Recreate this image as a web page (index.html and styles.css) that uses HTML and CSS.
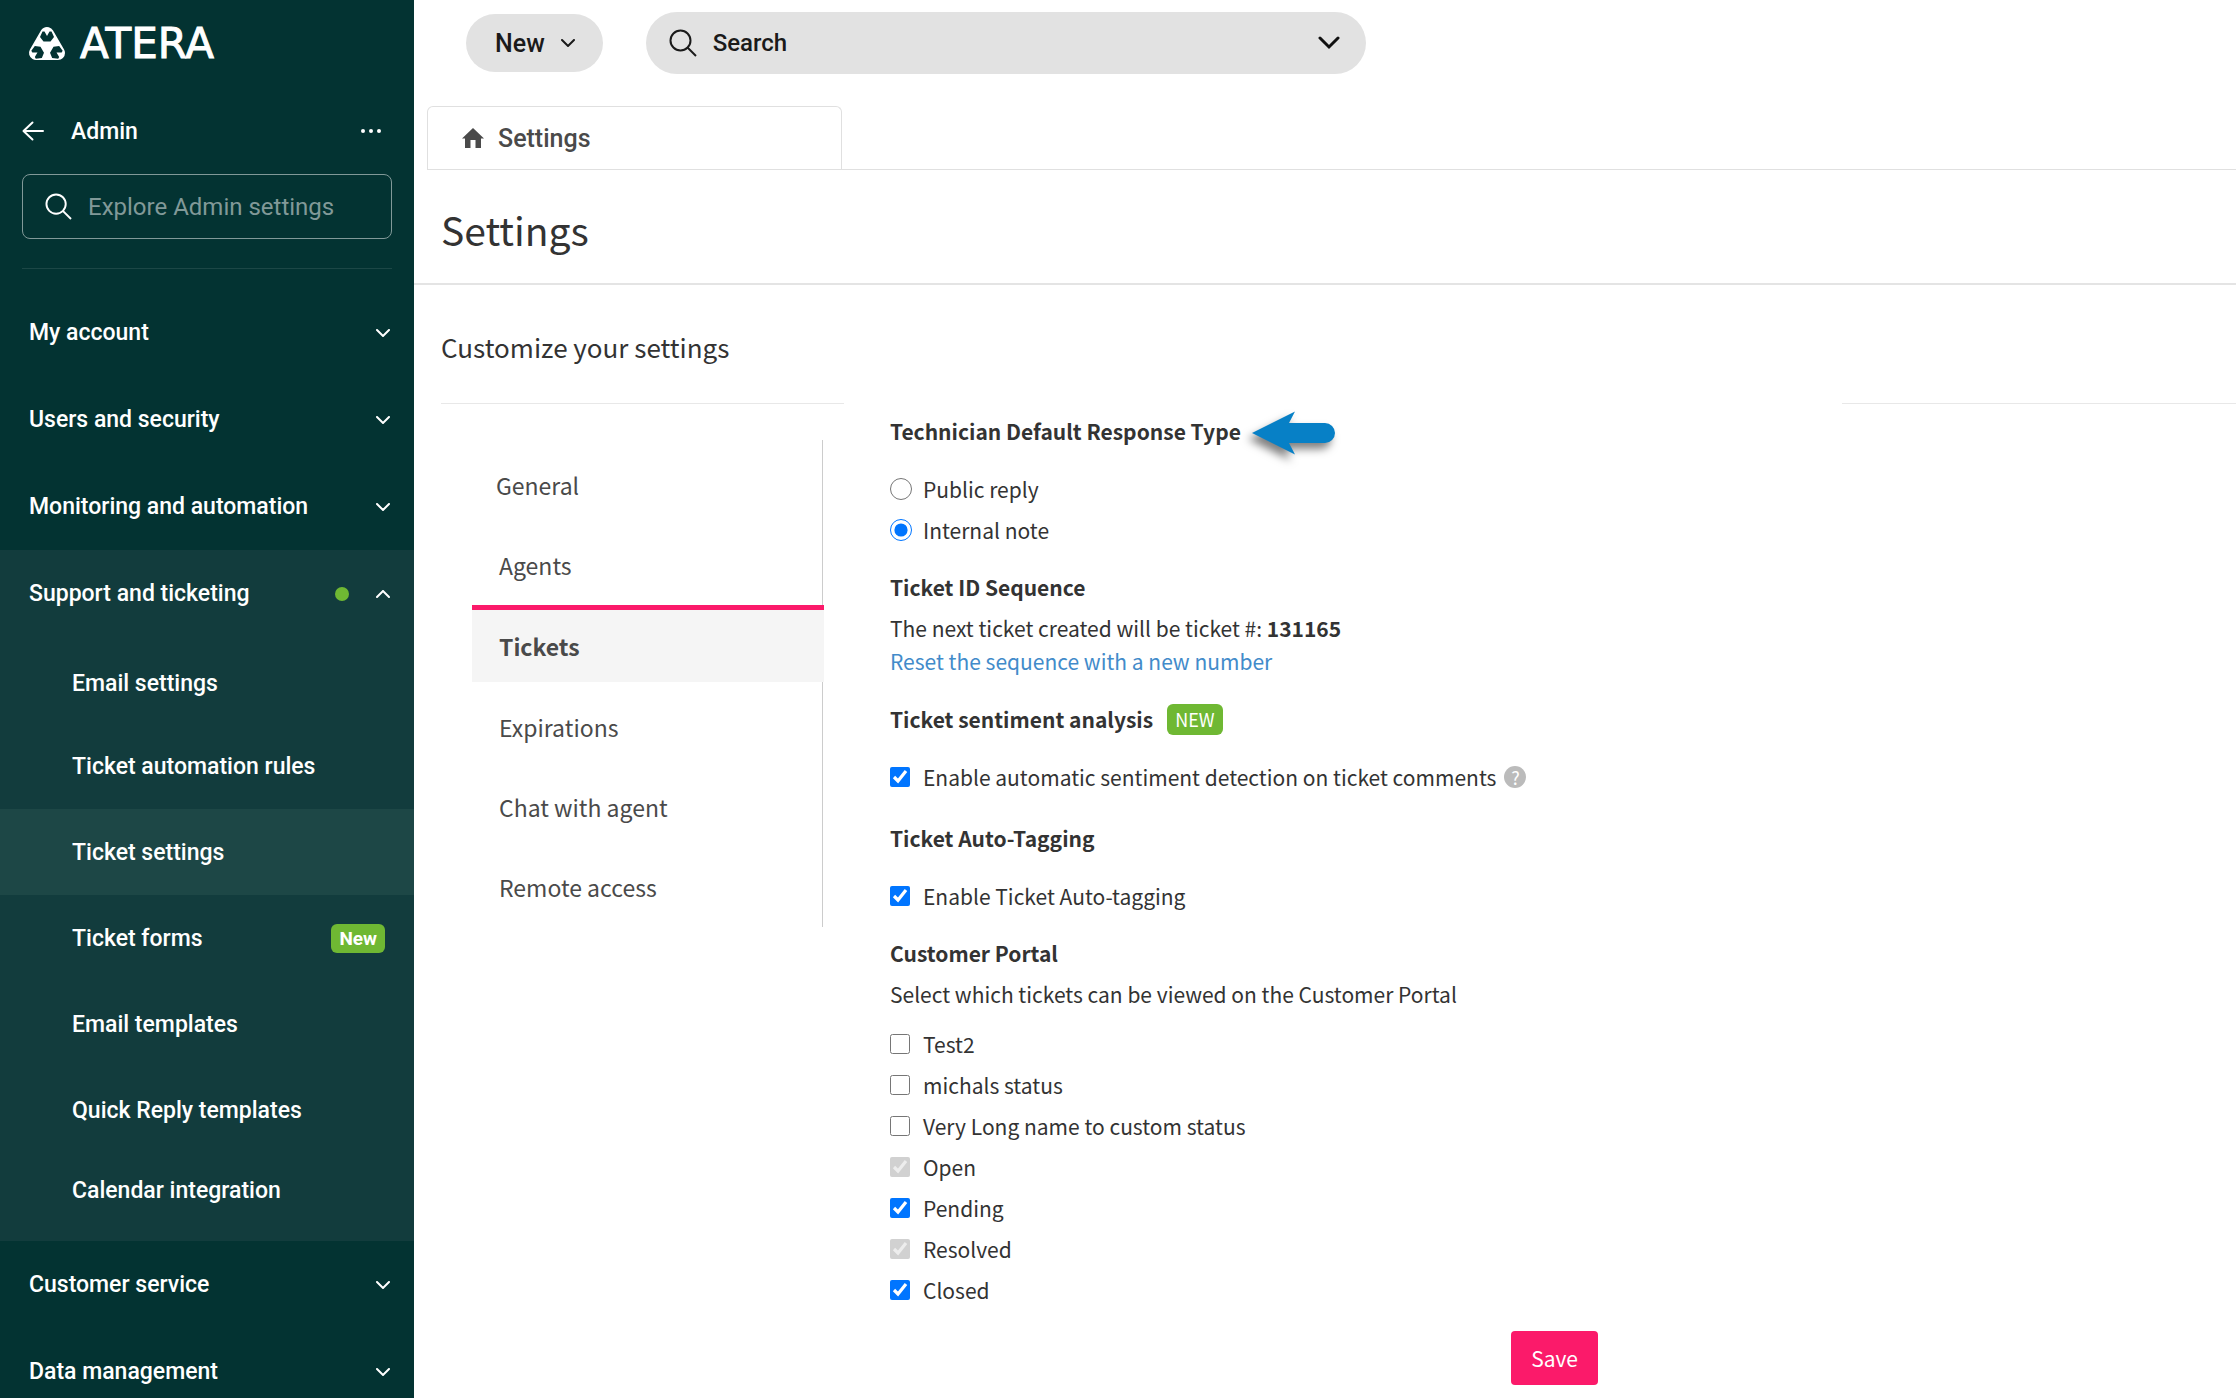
FILE: index.html
```html
<!DOCTYPE html>
<html lang="en">

<head>
    <meta charset="UTF-8">
    <meta name="viewport" content="width=device-width, initial-scale=1.0">
    <title>Settings</title>
    <link rel="stylesheet" href="styles.css">
</head>

<body>
    <!-- shared icons -->
    <svg class="sprite" aria-hidden="true">
        <symbol id="chevron" viewBox="0 0 14 8">
            <path d="M1 1l6 6 6-6" fill="none" stroke="currentColor" stroke-width="2" stroke-linecap="round" />
        </symbol>
        <symbol id="magnifier" viewBox="0 0 28 28">
            <circle cx="11.5" cy="11.5" r="10" fill="none" stroke="currentColor" stroke-width="2" />
            <path d="M18.5 18.5l8.500 8.500" stroke="currentColor" stroke-width="2" />
        </symbol>
    </svg>

    <div class="layout">
        <aside class="sidebar">
            <a href="#" class="logo" aria-label="Atera">
                <svg width="228" height="36" viewBox="0 0 228 36">
                    <path d="M19 9L8 28H30Z" fill="#fff" stroke="#fff" stroke-width="14" stroke-linejoin="round" />
                    <g fill="#033332">
                        <path id="blade" d="M14.500 6.500H16.500L19 11L21.500 6.500H23.500L26 12L22.500 16.500H15.500L12 12Z" />
                        <use href="#blade" transform="rotate(120 19 22)" />
                        <use href="#blade" transform="rotate(240 19 22)" />
                    </g>
                    <text x="52" y="33" class="logo-text">ATERA</text>
                </svg>
            </a>

            <div class="admin-bar">
                <button type="button" class="icon-btn" aria-label="Back">
                    <svg width="22" height="20" viewBox="0 0 22 20"><path d="M21 10H2M10.500 1.500L1.500 10l9 8.500" fill="none" stroke="#fff" stroke-width="2" stroke-linecap="round" stroke-linejoin="round" /></svg>
                </button>
                <span class="admin-title">Admin</span>
                <button type="button" class="icon-btn" aria-label="More">
                    <svg width="22" height="6" viewBox="0 0 22 6" fill="#fff"><circle cx="3" cy="3" r="2" /><circle cx="11" cy="3" r="2" /><circle cx="19" cy="3" r="2" /></svg>
                </button>
            </div>

            <label class="side-search">
                <svg width="27" height="27"><use href="#magnifier" /></svg>
                <input type="text" placeholder="Explore Admin settings" aria-label="Explore Admin settings">
            </label>

            <nav class="menu">
                <button type="button" class="menu-item">My account <svg class="chev"><use href="#chevron" /></svg></button>
                <button type="button" class="menu-item">Users and security <svg class="chev"><use href="#chevron" /></svg></button>
                <button type="button" class="menu-item">Monitoring and automation <svg class="chev"><use href="#chevron" /></svg></button>
                <div class="menu-group">
                    <button type="button" class="menu-item">Support and ticketing <span class="dot"></span><svg class="chev up"><use href="#chevron" /></svg></button>
                    <div class="submenu">
                        <a href="#">Email settings</a>
                        <a href="#">Ticket automation rules</a>
                        <a href="#" class="current">Ticket settings</a>
                        <a href="#">Ticket forms <span class="tag">New</span></a>
                        <a href="#">Email templates</a>
                        <a href="#">Quick Reply templates</a>
                        <a href="#">Calendar integration</a>
                    </div>
                </div>
                <button type="button" class="menu-item">Customer service <svg class="chev"><use href="#chevron" /></svg></button>
                <button type="button" class="menu-item">Data management <svg class="chev"><use href="#chevron" /></svg></button>
            </nav>
        </aside>

        <main class="main">
            <header class="topbar">
                <button type="button" class="new-btn">New <svg class="chev"><use href="#chevron" /></svg></button>
                <div class="search">
                    <svg width="28" height="28"><use href="#magnifier" /></svg>
                    <input type="text" placeholder="Search" aria-label="Search">
                    <button type="button" class="icon-btn" aria-label="Search options">
                        <svg width="22" height="14" viewBox="0 0 22 14"><path d="M2 2l9 9 9-9" fill="none" stroke="#111" stroke-width="3" stroke-linecap="round" /></svg>
                    </button>
                </div>
            </header>

            <div class="page-tabs">
                <a href="#" class="page-tab">
                    <svg width="22" height="20" viewBox="0 0 22 20"><path d="M11 0L0 10.500h3V20h5.500v-8h5v8H19v-9.500h3Z" fill="#4a4a4a" /></svg>
                    Settings
                </a>
            </div>

            <h1>Settings</h1>

            <h2>Customize your settings</h2>

            <div class="content">
                <div class="side-col">
                    <nav class="tabs">
                        <a href="#" class="first">General</a>
                        <a href="#">Agents</a>
                        <a href="#" class="active">Tickets</a>
                        <a href="#">Expirations</a>
                        <a href="#">Chat with agent</a>
                        <a href="#">Remote access</a>
                    </nav>
                </div>

                <form class="form">
                    <section>
                        <h3>Technician Default Response Type
                            <svg class="arrow" width="84" height="44" viewBox="0 0 84 44"><path d="M1 22L44 0.500 38 12h36a9.500 9.500 0 0 1 0 20H38L44 43.500Z" fill="#0780c6" /></svg>
                        </h3>
                        <label class="option"><input type="radio" name="reply">Public reply</label>
                        <label class="option"><input type="radio" name="reply" checked>Internal note</label>
                    </section>

                    <section>
                        <h3 class="tight">Ticket ID Sequence</h3>
                        <p>The next ticket created will be ticket #: <b>131165</b></p>
                        <p><a href="#">Reset the sequence with a new number</a></p>
                    </section>

                    <section class="wide">
                        <h3>Ticket sentiment analysis <span class="badge">NEW</span></h3>
                        <label class="option"><input type="checkbox" checked>Enable automatic sentiment detection on ticket comments <span class="help">?</span></label>
                    </section>

                    <section class="wide">
                        <h3>Ticket Auto-Tagging</h3>
                        <label class="option"><input type="checkbox" checked>Enable Ticket Auto-tagging</label>
                    </section>

                    <section>
                        <h3 class="tight">Customer Portal</h3>
                        <p>Select which tickets can be viewed on the Customer Portal</p>
                        <div class="statuses">
                            <label class="option"><input type="checkbox">Test2</label>
                            <label class="option"><input type="checkbox">michals status</label>
                            <label class="option"><input type="checkbox">Very Long name to custom status</label>
                            <label class="option"><input type="checkbox" checked disabled>Open</label>
                            <label class="option"><input type="checkbox" checked>Pending</label>
                            <label class="option"><input type="checkbox" checked disabled>Resolved</label>
                            <label class="option"><input type="checkbox" checked>Closed</label>
                        </div>
                    </section>

                    <button type="submit" class="save">Save</button>
                </form>

                <div class="side-col"></div>
            </div>
        </main>
    </div>
</body>

</html>
```

FILE: styles.css
```css
* {
    box-sizing: border-box;
}

body {
    margin: 0;
    color: #333;
    background-color: #fff;
    font-family: "Noto Sans CJK SC", "Noto Sans", sans-serif;
    font-size: 21px;
}

button,
input {
    font: inherit;
    margin: 0;
}

button {
    border: 0;
    padding: 0;
    background: none;
    color: inherit;
    cursor: pointer;
}

a {
    color: inherit;
    text-decoration: none;
}

svg {
    display: block;
    flex: none;
}

.sprite {
    position: absolute;
    width: 0;
    height: 0;
}

.layout {
    display: flex;
    height: 100vh;
    overflow: hidden;
}

/* sidebar */
.sidebar {
    width: 414px;
    flex: none;
    padding-top: 25px;
    overflow: hidden;
    background-color: #033332;
    color: #fff;
    font-family: Roboto, sans-serif;
    font-size: 23px;
    font-weight: 500;
}

.logo {
    display: block;
    margin-left: 28px;
}

.logo svg {
    overflow: visible;
}

.logo-text {
    font-family: "DejaVu Sans", sans-serif;
    font-size: 42px;
    font-weight: 400;
    fill: #fff;
    stroke: #fff;
    stroke-width: 1px;
}

.admin-bar {
    display: flex;
    align-items: center;
    height: 36px;
    margin: 52px 32px 0 22px;
}

.admin-title {
    flex: 1;
    margin-left: 27px;
}

.side-search {
    display: flex;
    align-items: center;
    gap: 16px;
    height: 65px;
    margin: 25px 22px 0;
    padding: 0 22px;
    border: 1px solid #819998;
    border-radius: 8px;
    font-size: 24px;
    font-weight: 400;
}

.side-search input,
.search input {
    flex: 1;
    min-width: 0;
    border: 0;
    padding: 0;
    outline: none;
    background: none;
}

.side-search input::placeholder {
    color: #819998;
    opacity: 1;
}

.menu {
    padding-top: 21px;
}

.menu::before {
    content: "";
    display: block;
    height: 1px;
    margin: 8px 22px 20px;
    background-color: #1c4746;
}

.menu-item {
    display: flex;
    align-items: center;
    width: 100%;
    height: 87px;
    padding: 0 24px 0 29px;
    text-align: left;
}

.chev {
    width: 14px;
    height: 8px;
    margin-left: auto;
}

.up {
    transform: rotate(180deg);
}

.menu-group {
    background-color: #123c3d;
}

.dot {
    width: 14px;
    height: 14px;
    margin: 0 27px 0 auto;
    border-radius: 50%;
    background-color: #6fb833;
}

.dot + .chev {
    margin-left: 0;
}

.submenu {
    padding: 6px 0 14px;
}

.submenu a {
    display: flex;
    align-items: center;
    justify-content: space-between;
    height: 86px;
    padding: 0 29px 0 72px;
}

.submenu a:first-child {
    height: 80px;
}

.submenu a:last-child {
    height: 74px;
}

.submenu .current {
    background-color: #1d4746;
}

.tag {
    padding: 0 8px;
    border-radius: 6px;
    background-color: #6fb833;
    font-size: 19px;
    font-weight: 700;
    line-height: 29px;
}

/* top bar */
.main {
    flex: 1;
    min-width: 0;
}

.topbar {
    display: flex;
    align-items: center;
    gap: 43px;
    padding: 12px 52px 0;
    color: #1a1a1a;
    font-family: Roboto, sans-serif;
    font-size: 24px;
    font-weight: 500;
}

.new-btn {
    display: flex;
    align-items: center;
    gap: 16px;
    height: 58px;
    padding: 0 28px 0 29px;
    border-radius: 29px;
    background-color: #e2e2e2;
    font-size: 25px;
}

.search {
    display: flex;
    align-items: center;
    gap: 16px;
    width: 720px;
    height: 62px;
    padding: 0 26px 0 23px;
    border-radius: 31px;
    background-color: #e2e2e2;
}

.search input::placeholder {
    color: #1a1a1a;
    opacity: 1;
}

.page-tabs {
    margin: 32px 0 0 13px;
    border-bottom: 1px solid #e0e0e0;
}

.page-tab {
    display: flex;
    align-items: center;
    gap: 14px;
    width: 415px;
    height: 63px;
    padding-left: 34px;
    border: 1px solid #e0e0e0;
    border-bottom: 0;
    border-radius: 6px 6px 0 0;
    color: #4a4a4a;
    font-family: Roboto, sans-serif;
    font-size: 25px;
    font-weight: 500;
}

h1 {
    margin: 0;
    padding: 35px 27px 29px;
    border-bottom: 2px solid #e4e4e4;
    font-size: 39px;
    font-weight: 400;
    line-height: 49px;
}

h2 {
    margin: 42px 27px 36px;
    font-size: 26px;
    font-weight: 400;
    line-height: 40px;
}

.content {
    display: grid;
    grid-template-columns: 403px 1fr 394px;
    margin-left: 27px;
}

.side-col {
    border-top: 1px solid #e8e8e8;
}

/* settings tabs */
.tabs {
    margin: 36px 0 0 31px;
    padding-top: 5px;
    width: 351px;
    border-right: 1px solid #ccc;
}

.tabs a {
    display: flex;
    align-items: center;
    height: 80px;
    padding-left: 27px;
    color: #4a4a4a;
    font-size: 23px;
}

.tabs .first {
    padding-left: 24px;
}

.tabs .active {
    height: 77px;
    margin: 0 -2px 5px 0;
    border-top: 5px solid #fb1a6a;
    background-color: #f5f5f5;
    font-weight: 600;
}

/* form */
.form {
    width: 708px;
    margin: 12px 0 0 46px;
}

section {
    margin-top: 21px;
}

section:first-child {
    margin-top: 0;
}

.wide {
    margin-top: 25px;
}

h3 {
    display: flex;
    align-items: center;
    margin: 0 0 21px;
    font-size: 21px;
    font-weight: 700;
    line-height: 32px;
}

.tight {
    margin-bottom: 9px;
}

.arrow {
    margin: -4px 0 -8px 10px;
    overflow: visible;
    filter: drop-shadow(-4px 6px 4px rgba(0, 0, 0, 0.5));
}

.option {
    display: flex;
    align-items: center;
    height: 41px;
}

.option input {
    width: 20px;
    height: 20px;
    margin-right: 13px;
}

.option input[type="radio"] {
    width: 22px;
    height: 22px;
    margin-right: 11px;
}

p {
    margin: 0;
    line-height: 33px;
}

p a {
    color: #428bca;
}

.badge {
    margin-left: 14px;
    padding: 0 8px;
    border-radius: 6px;
    background-color: #6fb833;
    color: #fff;
    font-size: 18px;
    font-weight: 400;
    line-height: 31px;
}

.help {
    width: 22px;
    height: 22px;
    margin-left: 8px;
    border-radius: 50%;
    background-color: #bbb;
    color: #fff;
    font-size: 18px;
    line-height: 22px;
    text-align: center;
}

.statuses {
    margin-top: 12px;
}

.save {
    display: block;
    height: 54px;
    margin: 21px 0 0 auto;
    padding: 0 20px;
    border-radius: 4px;
    background-color: #fb1a6a;
    color: #fff;
}
```
